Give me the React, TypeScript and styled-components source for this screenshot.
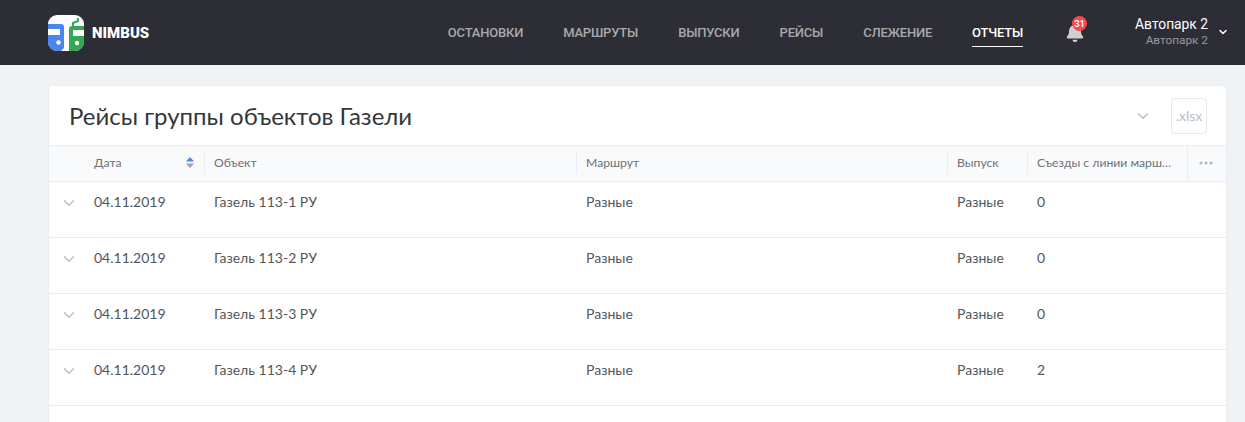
import styled, { createGlobalStyle } from "styled-components";
import { FaBell } from "react-icons/fa";
import { ChevronDown } from "lucide-react";

const GlobalStyle = createGlobalStyle`
  html, body {
    margin: 0;
    padding: 0;
    height: 100%;
    background-color: #eff3f6;
    overflow: hidden;
  }
  body {
    font-family: Lato, "Open Sans", "Noto Sans", sans-serif;
  }
  * {
    box-sizing: border-box;
  }
`;

const Header = styled.header`
  height: 65px;
  background-color: #2d2d35;
  display: flex;
  align-items: center;
  padding: 0 16px 0 48px;
  font-family: Roboto, sans-serif;
`;

const LogoBox = styled.div`
  display: flex;
  align-items: center;
  gap: 8px;
  margin-right: auto;
`;

const LogoName = styled.span`
  color: #fff;
  font-size: 15px;
  font-weight: 900;
`;

const Nav = styled.nav`
  display: flex;
  gap: 40px;
  height: 100%;
`;

const NavItem = styled.a<{ $active?: boolean }>`
  height: 100%;
  display: flex;
  align-items: center;
  position: relative;
  font-size: 13px;
  font-weight: 500;
  letter-spacing: -0.2px;
  color: ${(p) => (p.$active ? "#ffffff" : "#a9a9ad")};
  &::after {
    content: "";
    display: ${(p) => (p.$active ? "block" : "none")};
    position: absolute;
    left: 0;
    right: 0;
    bottom: 18px;
    height: 1px;
    background-color: #fff;
  }
`;

const BellBox = styled.div`
  position: relative;
  width: 18px;
  height: 20px;
  margin-left: 43px;
  margin-top: 1px;
  color: #d0d0d0;
  font-size: 19px;
  display: flex;
`;

const Badge = styled.span`
  position: absolute;
  top: -7px;
  left: 6px;
  width: 15px;
  height: 15px;
  border-radius: 50%;
  background-color: #f5484f;
  color: #fff;
  font-size: 9.5px;
  font-weight: 500;
  line-height: 15px;
  text-align: center;
`;

const UserBox = styled.div`
  margin-left: 51px;
  margin-top: -2px;
  display: flex;
  align-items: center;
  gap: 9px;
`;

const UserText = styled.div`
  display: flex;
  flex-direction: column;
  align-items: flex-end;
`;

const UserName = styled.span`
  color: #fff;
  font-size: 13.8px;
  line-height: 17px;
`;

const UserSub = styled.span`
  color: #9a9aa0;
  font-size: 11.8px;
  line-height: 14px;
`;

const Card = styled.section`
  margin: 20px 18px 0 48px;
  min-height: 337px;
  background-color: #fff;
  border-radius: 4px 4px 0 0;
  border-left: 1px solid #e9edf1;
  border-right: 1px solid #e9edf1;
  border-top: 1px solid #e9edf1;
`;

const CardHead = styled.div`
  height: 59px;
  display: flex;
  align-items: center;
  padding: 0 19px 0 20px;
`;

const Title = styled.h1`
  margin: 0 auto 0 0;
  font-size: 24px;
  font-weight: 400;
  color: #33373b;
`;

const XlsxButton = styled.button`
  width: 36px;
  height: 36px;
  margin-left: 19px;
  padding: 0;
  border: 1px solid #e6e9ec;
  border-radius: 4px;
  background-color: #fff;
  color: #b9bdc2;
  font-family: Lato, sans-serif;
  font-size: 14px;
`;

const gridCols = "45px 110px 372px 371px 80px 160px 1fr";

const HeadRow = styled.div`
  height: 37px;
  display: grid;
  grid-template-columns: ${gridCols};
  align-items: center;
  background-color: #f9fafb;
  border-top: 1px solid #e9ecf0;
  border-bottom: 1px solid #e9ecf0;
  font-size: 12.2px;
  color: #6d7278;
`;

const HeadCell = styled.div<{ $divider?: boolean }>`
  height: 100%;
  display: flex;
  align-items: center;
  justify-content: space-between;
  padding: 0 10px 2px 10px;
  white-space: nowrap;
  overflow: hidden;
  position: relative;
  &::before {
    content: "";
    display: ${(p) => (p.$divider ? "block" : "none")};
    position: absolute;
    left: 0;
    top: 7px;
    bottom: 7px;
    width: 1px;
    background-color: #e9ecf0;
  }
`;

const FirstHeadCell = styled(HeadCell)`
  padding-left: 0;
`;

const MenuCell = styled(HeadCell)`
  &::before {
    top: 0;
    bottom: 0;
  }
  justify-content: center;
  padding-right: 12px;
`;

const Ellipsis = styled.span`
  overflow: hidden;
  text-overflow: ellipsis;
`;

const DataRow = styled.div`
  height: 56px;
  display: grid;
  grid-template-columns: ${gridCols};
  align-items: start;
  padding-top: 11px;
  border-bottom: 1px solid #e9ecf0;
  font-size: 14px;
  line-height: 18px;
  color: #53575c;
`;

const ExpandCell = styled.div`
  display: flex;
  justify-content: center;
  padding: 1px 5px 0 0;
  color: #bcc0c5;
`;

const DateCell = styled.div``;

const DataCell = styled.div`
  padding-left: 10px;
`;

const ChevronSlot = styled.div`
  display: flex;
  color: #bcc0c5;
`;

const rows = [
  { name: "Газель 113-1 РУ", count: 0 },
  { name: "Газель 113-2 РУ", count: 0 },
  { name: "Газель 113-3 РУ", count: 0 },
  { name: "Газель 113-4 РУ", count: 2 },
];

function Logo() {
  return (
    <svg width="36" height="36" viewBox="0 0 36 36">
      <clipPath id="logo-clip">
        <rect width="36" height="36" rx="9" />
      </clipPath>
      <g clipPath="url(#logo-clip)">
        <rect width="36" height="36" fill="#fff" />
        <path d="M0 9h13a3 3 0 0 1 3 3v21l-3 3H0z" fill="#4a86ee" />
        <rect y="14" width="12" height="6" fill="#fff" />
        <circle cx="10.5" cy="27.5" r="2.2" fill="#fff" />
        <path d="M21 36V14a3 3 0 0 1 3-3h12v25z" fill="#34a853" />
        <path d="M25 12V8l5-2V3" fill="none" stroke="#34a853" strokeWidth="2" />
        <rect x="25" y="15" width="11" height="6" fill="#fff" />
        <circle cx="29" cy="28" r="2.2" fill="#fff" />
      </g>
    </svg>
  );
}

function SortIcon() {
  return (
    <svg width="8" height="11" viewBox="0 0 8 11">
      <path d="M4 0L8 4.5H0z" fill="#4a86ee" />
      <path d="M4 11L0 6.5h8z" fill="#9aa0a8" />
    </svg>
  );
}

function Dots() {
  return (
    <svg width="14" height="4" viewBox="0 0 14 4">
      <circle cx="2" cy="2" r="1.6" fill="#b5b9be" />
      <circle cx="7" cy="2" r="1.6" fill="#b5b9be" />
      <circle cx="12" cy="2" r="1.6" fill="#b5b9be" />
    </svg>
  );
}

export default function App() {
  return (
    <>
      <GlobalStyle />
      <Header>
        <LogoBox>
          <Logo />
          <LogoName>NIMBUS</LogoName>
        </LogoBox>
        <Nav>
          <NavItem>ОСТАНОВКИ</NavItem>
          <NavItem>МАРШРУТЫ</NavItem>
          <NavItem>ВЫПУСКИ</NavItem>
          <NavItem>РЕЙСЫ</NavItem>
          <NavItem>СЛЕЖЕНИЕ</NavItem>
          <NavItem $active>ОТЧЕТЫ</NavItem>
        </Nav>
        <BellBox>
          <FaBell />
          <Badge>31</Badge>
        </BellBox>
        <UserBox>
          <UserText>
            <UserName>Автопарк 2</UserName>
            <UserSub>Автопарк 2</UserSub>
          </UserText>
          <ChevronDown size={12} color="#fff" strokeWidth={3} />
        </UserBox>
      </Header>
      <Card>
        <CardHead>
          <Title>Рейсы группы объектов Газели</Title>
          <ChevronSlot>
            <ChevronDown size={18} strokeWidth={2} />
          </ChevronSlot>
          <XlsxButton>.xlsx</XlsxButton>
        </CardHead>
        <HeadRow>
          <div />
          <FirstHeadCell>
            Дата
            <SortIcon />
          </FirstHeadCell>
          <HeadCell $divider>Объект</HeadCell>
          <HeadCell $divider>Маршрут</HeadCell>
          <HeadCell $divider>Выпуск</HeadCell>
          <HeadCell $divider>
            <Ellipsis>Съезды с линии маршрута</Ellipsis>
          </HeadCell>
          <MenuCell $divider>
            <Dots />
          </MenuCell>
        </HeadRow>
        {rows.map((row) => (
          <DataRow key={row.name}>
            <ExpandCell>
              <ChevronDown size={18} strokeWidth={2} />
            </ExpandCell>
            <DateCell>04.11.2019</DateCell>
            <DataCell>{row.name}</DataCell>
            <DataCell>Разные</DataCell>
            <DataCell>Разные</DataCell>
            <DataCell>{row.count}</DataCell>
            <div />
          </DataRow>
        ))}
      </Card>
    </>
  );
}
